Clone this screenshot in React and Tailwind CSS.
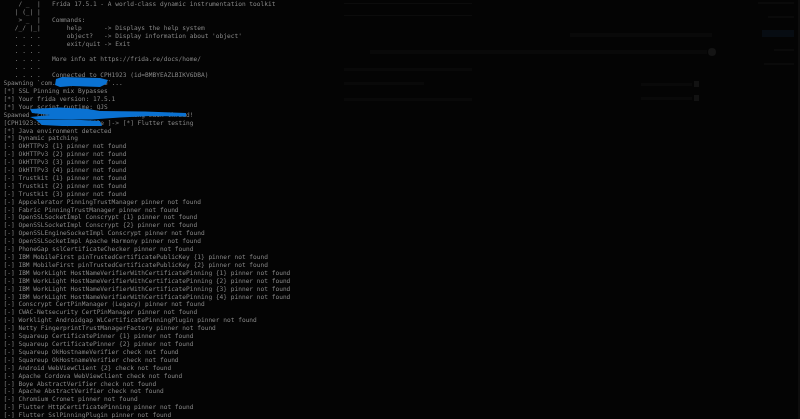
const lines = [
  "    / _  |   Frida 17.5.1 - A world-class dynamic instrumentation toolkit",
  "   | (_| |",
  "    > _  |   Commands:",
  "   /_/ |_|       help      -> Displays the help system",
  "   . . . .       object?   -> Display information about 'object'",
  "   . . . .       exit/quit -> Exit",
  "   . . . .",
  "   . . . .   More info at https://frida.re/docs/home/",
  "   . . . .",
  "   . . . .   Connected to CPH1923 (id=BMBYEAZLBIKV6DBA)",
  "Spawning `com.example.mobile`...",
  "[*] SSL Pinning mix Bypasses",
  "[*] Your frida version: 17.5.1",
  "[*] Your script runtime: QJS",
  "Spawned `com.example.mobile`. Resuming main thread!",
  "[CPH1923:com.example.mobile ]-> [*] Flutter testing",
  "[*] Java environment detected",
  "[*] Dynamic patching",
  "[-] OkHTTPv3 {1} pinner not found",
  "[-] OkHTTPv3 {2} pinner not found",
  "[-] OkHTTPv3 {3} pinner not found",
  "[-] OkHTTPv3 {4} pinner not found",
  "[-] Trustkit {1} pinner not found",
  "[-] Trustkit {2} pinner not found",
  "[-] Trustkit {3} pinner not found",
  "[-] Appcelerator PinningTrustManager pinner not found",
  "[-] Fabric PinningTrustManager pinner not found",
  "[-] OpenSSLSocketImpl Conscrypt {1} pinner not found",
  "[-] OpenSSLSocketImpl Conscrypt {2} pinner not found",
  "[-] OpenSSLEngineSocketImpl Conscrypt pinner not found",
  "[-] OpenSSLSocketImpl Apache Harmony pinner not found",
  "[-] PhoneGap sslCertificateChecker pinner not found",
  "[-] IBM MobileFirst pinTrustedCertificatePublicKey {1} pinner not found",
  "[-] IBM MobileFirst pinTrustedCertificatePublicKey {2} pinner not found",
  "[-] IBM WorkLight HostNameVerifierWithCertificatePinning {1} pinner not found",
  "[-] IBM WorkLight HostNameVerifierWithCertificatePinning {2} pinner not found",
  "[-] IBM WorkLight HostNameVerifierWithCertificatePinning {3} pinner not found",
  "[-] IBM WorkLight HostNameVerifierWithCertificatePinning {4} pinner not found",
  "[-] Conscrypt CertPinManager (Legacy) pinner not found",
  "[-] CWAC-Netsecurity CertPinManager pinner not found",
  "[-] Worklight Androidgap WLCertificatePinningPlugin pinner not found",
  "[-] Netty FingerprintTrustManagerFactory pinner not found",
  "[-] Squareup CertificatePinner {1} pinner not found",
  "[-] Squareup CertificatePinner {2} pinner not found",
  "[-] Squareup OkHostnameVerifier check not found",
  "[-] Squareup OkHostnameVerifier check not found",
  "[-] Android WebViewClient {2} check not found",
  "[-] Apache Cordova WebViewClient check not found",
  "[-] Boye AbstractVerifier check not found",
  "[-] Apache AbstractVerifier check not found",
  "[-] Chromium Cronet pinner not found",
  "[-] Flutter HttpCertificatePinning pinner not found",
  "[-] Flutter SslPinningPlugin pinner not found",
];

function Scribbles() {
  return (
    <svg className="absolute left-0 top-0" width="200" height="130" viewBox="0 0 200 130" fill="#0a72d2">
      <path d="M56 79 L62 77 L100 78 L108 80 L106 84 L100 87 L72 86 L60 87 L55 85 Z" />
      <path d="M30 109 L60 107.5 L88 109 L100 111 L145 111.5 L186 113 L186 116.5 L150 116 L120 117.5 L92 119.5 L36 119.5 L30 117 L50 115 L32 113 Z" />
      <path d="M36 120 L72 119.5 L100 121 L102 126 L62 126 L42 125 Z" />
    </svg>
  );
}

function GhostPanel() {
  const line = "h-px bg-[#0c0c0c]";
  const bar = "h-[3px] bg-[#090909]";
  const box = "w-[5px] h-[6px] bg-[#121212]";
  return (
    <div className="absolute inset-y-0 right-0 w-[480px] flex">
      <div className="flex-1 flex flex-col pt-[3px] pl-[24px] pr-[40px]">
        <div className="flex flex-col gap-[11px] w-[128px]">
          <div className={line} />
          <div className={line} />
        </div>
        <div className="mt-[17px] self-end w-[142px] mr-[4px] h-[4px] bg-[#090909]" />
        <div className="mt-[11px] flex items-center gap-[1px] pl-[26px]">
          <div className="h-[4px] flex-1 bg-[#090909]" />
          <div className="w-[8px] h-[8px] rounded-full bg-[#141414]" />
        </div>
        <div className="mt-[12px] flex justify-between items-start">
          <div className="flex flex-col gap-[11px] w-[128px]">
            <div className={bar} />
            <div className={`${bar} w-[80px]`} />
            <div className={`${bar} mt-[2px]`} />
          </div>
          <div className="flex flex-col gap-[8px] mt-[13px] mr-[17px] w-[58px]">
            <div className="flex items-center gap-[2px]">
              <div className={`${bar} flex-1`} />
              <div className={box} />
            </div>
            <div className="flex items-center gap-[2px]">
              <div className={`${bar} flex-1`} />
              <div className={box} />
            </div>
          </div>
        </div>
      </div>
      <div className="w-[42px] flex flex-col items-end gap-[12px] pt-[2px] pr-[4px]">
        <div className="h-[2px] w-[36px] bg-[#0a0a0a]" />
        <div className="h-[2px] w-[26px] bg-[#0a0a0a]" />
        <div className="h-[7px] w-[32px] bg-[#070c12]" />
        <div className="h-[2px] w-[20px] bg-[#0a0a0a]" />
        <div className="h-[2px] w-[30px] bg-[#0a0a0a]" />
      </div>
      <div className="w-[2px] bg-[#0d0d0d]" />
    </div>
  );
}

export default function App() {
  return (
    <div className="relative h-[419px] w-[800px] overflow-hidden bg-[#040404]">
      <GhostPanel />
      <pre className="pl-[3.5px] text-[6.2px] leading-[7.92px] text-[#868686] blur-[0.4px] font-['DejaVu_Sans_Mono',monospace]">
        {lines.map((l, i) => (
          <div key={i} className="h-[7.92px] whitespace-pre">{l}</div>
        ))}
      </pre>
      <Scribbles />
    </div>
  );
}
